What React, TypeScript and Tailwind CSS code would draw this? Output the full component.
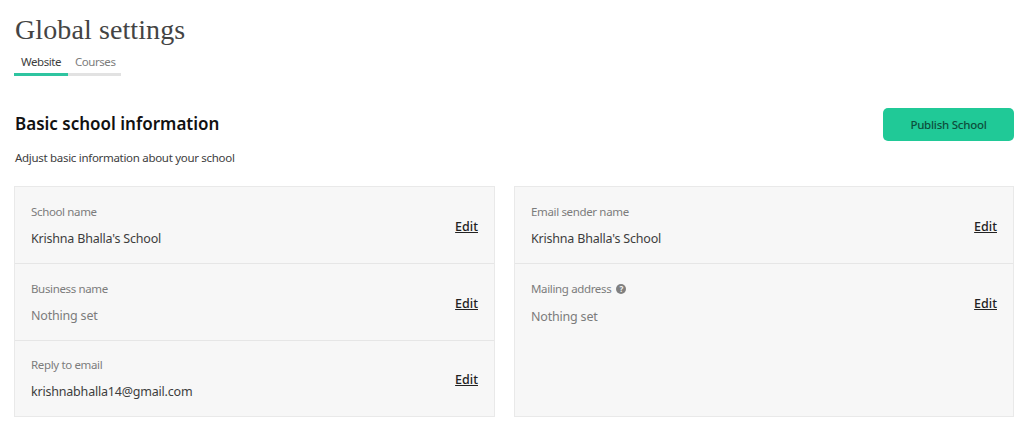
import React from 'react';

function Row({ label, value, muted, help, last }: { label: string; value: string; muted?: boolean; help?: boolean; last?: boolean }) {
  return (
    <div className={`pl-4 pr-4 flex items-center justify-between ${last ? 'h-[75px]' : 'h-[77px] border-b border-[#e6e6e6]'}`}>
      <div className={help ? 'mt-[3px]' : 'mt-px'}>
        <div className="flex items-center gap-[5px] text-[11.5px] leading-4 tracking-[-0.35px] text-[#7c7c7c]">
          {label}
          {help && (
            <span className="w-[10px] h-[10px] rounded-full bg-[#808080] flex items-center justify-center text-[8px] leading-none font-bold text-[#f6f6f6]">?</span>
          )}
        </div>
        <div className={`${help ? 'mt-[11px]' : 'mt-[10px]'} text-[12.5px] leading-[18px] tracking-[-0.2px] ${muted ? 'text-[#7c7c7c]' : 'text-[#3d3d3d]'}`}>{value}</div>
      </div>
      <a className={`${last && !help ? 'mt-[3px]' : 'mt-[5px]'} text-[12.5px] font-medium underline text-[#222222]`}>Edit</a>
    </div>
  );
}

export default function App() {
  return (
    <div className="w-[1024px] h-[434px] bg-white px-[14px] overflow-hidden font-['Noto_Sans',sans-serif]">
      <h1 className="pt-[13px] pl-px text-[28px] leading-[34px] tracking-[0.1px] text-[#444444] font-['Liberation_Serif',serif]">Global settings</h1>
      <div className="w-[107px] flex text-[11.5px] leading-4 tracking-[-0.45px]">
        <div className="w-[54px] h-[29px] pl-[7px] pt-[7px] border-b-[3px] border-[#2ec4a0] text-[#3d3d3d]">Website</div>
        <div className="w-[53px] h-[29px] pl-[7px] pt-[7px] border-b-[3px] border-[#e2e2e2] text-[#7c7c7c]">Courses</div>
      </div>
      <div className="mt-[32px] mr-[-4px] flex items-start justify-between">
        <h2 className="pt-[4px] pl-px text-[17px] leading-6 font-semibold text-[#111111]">Basic school information</h2>
        <button className="w-[131px] h-[33px] rounded-[5px] bg-[#20c997] text-[11.5px] font-medium tracking-[-0.25px] text-[#0d4f3c]">Publish School</button>
      </div>
      <p className="mt-[9px] pl-px text-[11.5px] leading-4 tracking-[-0.3px] text-[#3d3d3d]">Adjust basic information about your school</p>
      <div className="mt-[20px] mr-[-4px] flex gap-[19px]">
        <div className="w-[481px] h-[231px] bg-[#f7f7f7] border border-[#e9e9e9]">
          <Row label="School name" value="Krishna Bhalla's School" />
          <Row label="Business name" value="Nothing set" muted />
          <Row label="Reply to email" value="krishnabhalla14@gmail.com" last />
        </div>
        <div className="w-[500px] h-[231px] bg-[#f7f7f7] border border-[#e9e9e9]">
          <Row label="Email sender name" value="Krishna Bhalla's School" />
          <Row label="Mailing address" value="Nothing set" muted help last />
        </div>
      </div>
    </div>
  );
}
